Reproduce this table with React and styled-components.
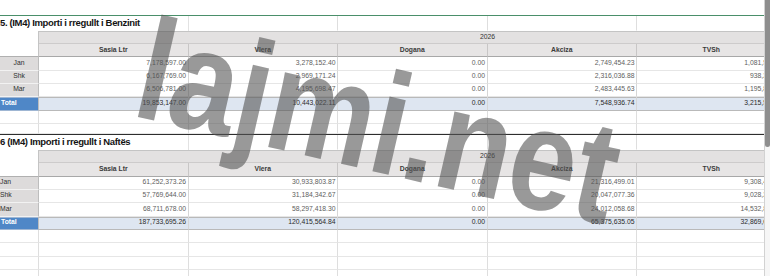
import React from 'react'
import styled, { createGlobalStyle } from 'styled-components'

const GlobalStyle = createGlobalStyle`
  html, body {
    margin: 0;
    padding: 0;
    background: #fff;
  }
  body {
    font-family: 'Liberation Sans', Arial, sans-serif;
  }
`;

const COLS = '39px repeat(6, 149.5px)';
const LABELS = ['Sasia Ltr', 'Vlera', 'Dogana', 'Akciza', 'TVSh', 'Totali'];

const tables = [
  {
    title: '5. (IM4) Importi i rregullt i Benzinit',
    rule: '#4a8f6a',
    center: true,
    rows: [
      ['Jan', '7,178,597.00', '3,278,152.40', '0.00', '2,749,454.23', '1,081,521.33'],
      ['Shk', '6,167,769.00', '2,969,171.24', '0.00', '2,316,036.88', '938,241.62'],
      ['Mar', '6,506,781.00', '4,195,698.47', '0.00', '2,483,445.63', '1,195,828.82'],
    ],
    total: ['Total', '19,853,147.00', '10,443,022.11', '0.00', '7,548,936.74', '3,215,591.77'],
    blanks: ['13.33px', '10.4px'],
  },
  {
    title: '6 (IM4) Importi i rregullt i Naftës',
    rule: '#2e2e2e',
    center: false,
    rows: [
      ['Jan', '61,252,373.26', '30,933,803.87', '0.00', '21,316,499.01', '9,308,460.58'],
      ['Shk', '57,769,644.00', '31,184,342.67', '0.00', '20,047,077.36', '9,028,284.01'],
      ['Mar', '68,711,678.00', '58,297,418.30', '0.00', '24,012,058.68', '14,532,895.40'],
    ],
    total: ['Total', '187,733,695.26', '120,415,564.84', '0.00', '65,375,635.05', '32,869,639.99'],
    blanks: ['13.33px', '13.33px', '13.33px', '13.33px'],
  },
];

const Frame = styled.div`
  position: relative;
  display: flex;
  width: 770px;
  height: 276px;
  overflow: hidden;
  background: #fff;
`;

const Sheet = styled.div`
  flex: 0 0 764px;
  overflow: hidden;
  display: flex;
  flex-direction: column;
`;

const TopGap = styled.div`
  flex: none;
  height: 15px;
`;

const Grid = styled.div`
  flex: none;
  display: grid;
  grid-template-columns: ${COLS};
  width: 936px;
  font-size: 6.8px;
  line-height: 10px;
`;

const TitleRow = styled(Grid)`
  box-sizing: border-box;
  height: 15.7px;
  border-top: 1.5px solid ${(p) => p.$rule};
`;

const Title = styled.div`
  grid-column: 1 / 3;
  border-right: 1px solid #e2e2e2;
  font-size: 9.5px;
  font-weight: bold;
  letter-spacing: -0.35px;
  line-height: 14px;
  color: #141414;
  white-space: nowrap;
`;

const Blank = styled.div`
  box-sizing: border-box;
  border-right: 1px solid #dedede;
  border-bottom: 1px solid ${(p) => p.$line || 'transparent'};
`;

const HeadGrid = styled(Grid)`
  grid-template-rows: 13.3px 13.3px;
`;

const Corner = styled.div`
  grid-row: 1 / 3;
  box-sizing: border-box;
  background: #fff;
  border-right: 1px solid #c4c4c4;
  border-bottom: 1.5px solid #b0b0b0;
`;

const Year = styled.div`
  grid-column: 2 / 8;
  box-sizing: border-box;
  background: #e3e1e1;
  border-top: 1px solid #c4c4c4;
  border-bottom: 1px solid #cdcbcb;
  text-align: center;
  color: #333;
`;

const Label = styled.div`
  box-sizing: border-box;
  background: #e7e5e5;
  border-right: 1px solid #c8c6c6;
  border-bottom: 1.5px solid #a8a8a8;
  text-align: center;
  font-weight: bold;
  color: #3a3a3a;
  padding-top: 1px;
`;

const Row = styled(Grid)`
  height: ${(p) => p.$h || '13.33px'};
`;

const RowHead = styled.div`
  box-sizing: border-box;
  background: ${(p) => (p.$total ? '#4f87c7' : '#dddbdb')};
  color: ${(p) => (p.$total ? '#fff' : '#2e2e2e')};
  font-weight: ${(p) => (p.$total ? 'bold' : 'normal')};
  text-align: ${(p) => (p.$total || !p.$center ? 'left' : 'center')};
  padding-left: ${(p) => (p.$total ? '1px' : '0')};
  padding-top: 0.5px;
  border-right: 1px solid #bdbdbd;
  border-bottom: 1px solid ${(p) => (p.$total ? '#9fb6d3' : '#f2f2f2')};
  box-shadow: ${(p) => (p.$total ? 'inset 0 1px #9fb6d3' : 'none')};
`;

const Cell = styled.div`
  box-sizing: border-box;
  background: ${(p) => (p.$total ? '#dee6f1' : '#fff')};
  color: ${(p) => (p.$total ? '#2a2a2a' : '#5e5e5e')};
  text-align: right;
  padding: 0.5px 1.5px 0 0;
  white-space: nowrap;
  border-right: 1px solid #d6d6d6;
  border-bottom: 1px solid ${(p) => (p.$total ? '#b9b9b9' : '#e6e6e6')};
  box-shadow: ${(p) => (p.$total ? 'inset 0 1px #b9b9b9' : 'none')};
`;

const Scrollbar = styled.div`
  flex: 0 0 6px;
  box-sizing: border-box;
  background: #f6f6f6;
  border-left: 1px solid #d2d2d2;
`;

const Thumb = styled.div`
  height: 147px;
  background: #8e8e8e;
  border-radius: 0 0 3px 3px;
`;

/* watermark: tall condensed lettering, tilted down to the right */
const Watermark = styled.div`
  position: absolute;
  left: 130px;
  top: -7.4px;
  font-family: 'Liberation Sans', Arial, sans-serif;
  font-size: 145px;
  font-weight: bold;
  line-height: 1;
  color: rgba(85, 85, 85, 0.6);
  white-space: nowrap;
  transform-origin: 0 120.4px;
  transform: rotate(13deg) scaleX(0.83);
  pointer-events: none;
`;

const Section = ({ data }) => (
  <>
    <TitleRow $rule={data.rule}>
      <Title>{data.title}</Title>
      {[0, 1, 2, 3, 4].map((i) => (
        <Blank key={i} />
      ))}
    </TitleRow>
    <HeadGrid>
      <Corner />
      <Year>2026</Year>
      {LABELS.map((l) => (
        <Label key={l}>{l}</Label>
      ))}
    </HeadGrid>
    {data.rows.map((r) => (
      <Row key={r[0]}>
        <RowHead $center={data.center}>{r[0]}</RowHead>
        {r.slice(1).map((v, i) => (
          <Cell key={i}>{v}</Cell>
        ))}
        <Cell />
      </Row>
    ))}
    <Row>
      <RowHead $total>{data.total[0]}</RowHead>
      {data.total.slice(1).map((v, i) => (
        <Cell key={i} $total>
          {v}
        </Cell>
      ))}
      <Cell $total />
    </Row>
    {data.blanks.map((h, k) => (
      <Row key={k} $h={h}>
        {[0, 1, 2, 3, 4, 5, 6].map((i) => (
          <Blank key={i} $line="#e6e6e6" />
        ))}
      </Row>
    ))}
  </>
);

const App = () => (
  <>
    <GlobalStyle />
    <Frame>
      <Sheet>
        <TopGap />
        {tables.map((t) => (
          <Section key={t.title} data={t} />
        ))}
      </Sheet>
      <Scrollbar>
        <Thumb />
      </Scrollbar>
      <Watermark>lajmi.net</Watermark>
    </Frame>
  </>
);

export default App;
